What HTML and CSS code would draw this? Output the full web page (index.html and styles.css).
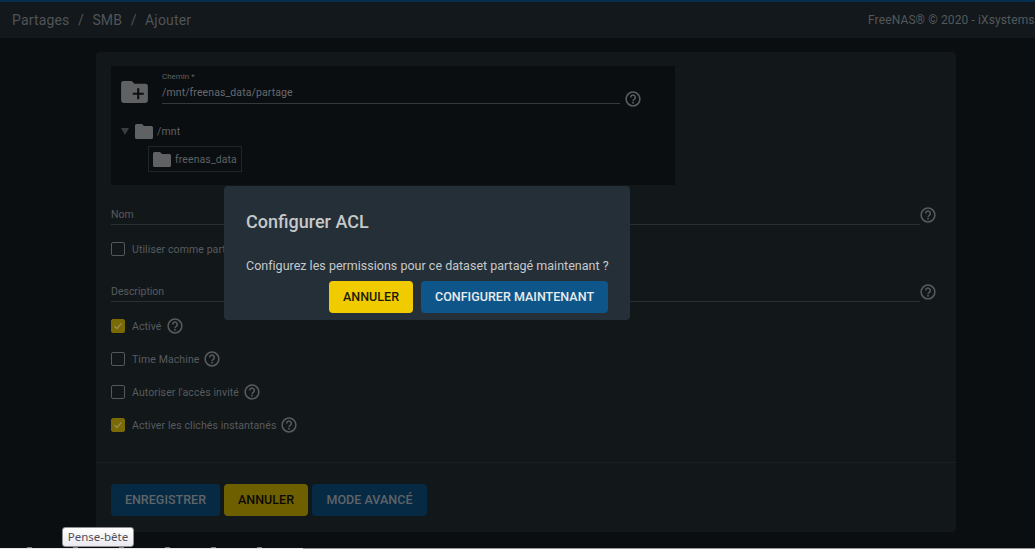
FILE: index.html
```html
<!DOCTYPE html>
<html lang="fr">
<head>
<meta charset="utf-8">
<title>Partages / SMB / Ajouter</title>
<link rel="stylesheet" href="styles.css">
</head>
<body>
<svg class="defs" width="0" height="0" aria-hidden="true">
  <symbol id="help" viewBox="0 0 16 16">
    <circle cx="8" cy="8" r="6.9" fill="none" stroke="currentColor" stroke-width="1.5"/>
    <path d="M5.7 6.4a2.3 2.3 0 1 1 3.6 1.9c-.8.5-1.3 1-1.3 1.9" fill="none" stroke="currentColor" stroke-width="1.5"/>
    <rect x="7.2" y="11" width="1.6" height="1.6" fill="currentColor"/>
  </symbol>
  <symbol id="folder" viewBox="0 0 18 15">
    <path d="M1.5 0H7l2 2h7.5A1.5 1.5 0 0 1 18 3.500V13.500A1.500 1.500 0 0 1 16.500 15H1.500A1.500 1.500 0 0 1 0 13.500V1.500A1.500 1.500 0 0 1 1.500 0z" fill="currentColor"/>
  </symbol>
  <symbol id="tick" viewBox="0 0 14 14">
    <path d="M3 7.200l2.800 2.800L11 4" fill="none" stroke="currentColor" stroke-width="1.500"/>
  </symbol>
</svg>
<div class="shell">
  <header class="topbar">
    <nav class="crumbs"><span>Partages</span><i>/</i><span>SMB</span><i>/</i><span>Ajouter</span></nav>
    <div class="copyright">FreeNAS® © 2020 - iXsystems</div>
  </header>
  <main class="content">
    <form class="card">
      <section class="explorer">
        <div class="path-row">
          <svg class="folder-add" viewBox="0 0 28 23">
            <path d="M2.500 0H11l3 3h11.500A2.500 2.500 0 0 1 28 5.500V20.500A2.500 2.500 0 0 1 25.500 23H2.500A2.500 2.500 0 0 1 0 20.500V2.500A2.500 2.500 0 0 1 2.500 0z" fill="#5f6163"/>
            <path d="M16.800 7.500h2.200v4.700h4.700v2.200H19v4.700h-2.200v-4.700h-4.700v-2.200h4.700z" fill="#0b0f12"/>
          </svg>
          <div class="path-field">
            <label class="mini-label">Chemin *</label>
            <div class="path-value">/mnt/freenas_data/partage</div>
          </div>
          <svg class="help help-path"><use href="#help"/></svg>
        </div>
        <div class="tree-root">
          <span class="caret"></span>
          <svg class="tree-folder"><use href="#folder"/></svg>
          <span>/mnt</span>
        </div>
        <div class="tree-child">
          <svg class="tree-folder"><use href="#folder"/></svg>
          <span>freenas_data</span>
        </div>
      </section>

      <div class="field field-name">
        <div class="field-line"><span>Nom</span></div>
        <svg class="help"><use href="#help"/></svg>
      </div>
      <div class="check check-home">
        <span class="box"></span><span>Utiliser comme partage home</span>
      </div>
      <div class="field field-desc">
        <div class="field-line"><span>Description</span></div>
        <svg class="help"><use href="#help"/></svg>
      </div>
      <div class="check check-first">
        <span class="box on"><svg><use href="#tick"/></svg></span><span>Activé</span>
        <svg class="help"><use href="#help"/></svg>
      </div>
      <div class="check">
        <span class="box"></span><span>Time Machine</span>
        <svg class="help"><use href="#help"/></svg>
      </div>
      <div class="check">
        <span class="box"></span><span>Autoriser l'accès invité</span>
        <svg class="help"><use href="#help"/></svg>
      </div>
      <div class="check">
        <span class="box on"><svg><use href="#tick"/></svg></span><span>Activer les clichés instantanés</span>
        <svg class="help"><use href="#help"/></svg>
      </div>
      <div class="actions">
        <button type="button" class="btn dim-blue btn-save">ENREGISTRER</button>
        <button type="button" class="btn dim-yellow btn-cancel">ANNULER</button>
        <button type="button" class="btn dim-blue btn-adv">MODE AVANCÉ</button>
      </div>
    </form>
  </main>
  <div class="page-edge"></div>
</div>

<div class="dialog" role="dialog">
  <h2>Configurer ACL</h2>
  <p>Configurez les permissions pour ce dataset partagé maintenant ?</p>
  <div class="dialog-actions">
    <button type="button" class="btn yellow dlg-cancel">ANNULER</button>
    <button type="button" class="btn blue dlg-ok">CONFIGURER MAINTENANT</button>
  </div>
</div>

<div class="tooltip">Pense-bête</div>
</body>
</html>
```
FILE: styles.css
```css
* { box-sizing: border-box; }
html, body { margin: 0; height: 100%; }
body {
  overflow: hidden;
  background: #0a0e11;
  font-family: Roboto, "Liberation Sans", sans-serif;
  color: #5d6063;
}
.defs { position: absolute; }
.shell { height: 549px; display: flex; flex-direction: column; }

.topbar {
  height: 38px;
  flex: none;
  border-top: 2px solid #062f4d;
  background: #12181b;
  display: flex;
  justify-content: space-between;
  align-items: center;
  padding: 0 0 0 12px;
}
.crumbs { display: flex; font-size: 14px; letter-spacing: .16px; color: #505457; }
.crumbs i { font-style: normal; margin: 0 8.500px; }
.copyright { font-size: 12px; letter-spacing: .12px; color: #54585b; white-space: nowrap; width: 167px; overflow: hidden; }

.content { flex: 1; padding: 14px 79px 15px 96px; min-height: 0; }
.card {
  height: 480px;
  background: #12171a;
  border-radius: 4px;
  padding: 14px 20px 0 15px;
  display: flex;
  flex-direction: column;
}

.explorer {
  width: 564px;
  height: 119px;
  flex: none;
  background: #0a0e11;
  padding: 0 0 0 10px;
}
.path-row { display: flex; height: 48px; position: relative; }
.folder-add { width: 27px; height: 22px; margin-top: 15px; flex: none; }
.path-field { width: 458px; margin-left: 14px; height: 38px; border-bottom: 1px solid #35393c; padding-top: 6px; }
.mini-label { display: block; font-size: 8px; line-height: 9px; color: #5e6163; }
.path-value { font-size: 10.500px; line-height: 13px; margin-top: 5px; letter-spacing: .1px; color: #686b6e; }
.help { width: 16px; height: 16px; flex: none; color: #595b5d; }
.help-path { margin: 25px 0 0 5px; color: #5c5e60; }

.tree-root { display: flex; align-items: center; height: 18px; margin-top: 8px; font-size: 10.500px; letter-spacing: .15px; color: #5f6265; }
.caret { width: 0; height: 0; border-left: 4px solid transparent; border-right: 4px solid transparent; border-top: 7px solid #3a3d3f; margin-right: 6px; }
.tree-folder { width: 18px; height: 15px; color: #5f6163; margin-right: 4px; flex: none; }
.tree-child {
  display: flex;
  align-items: center;
  width: 94px;
  height: 26px;
  margin: 6px 0 0 27px;
  padding-left: 4px;
  font-size: 10.500px;
  letter-spacing: .1px;
  color: #5f6265;
  border: 1px solid #202528;
}

.field { display: flex; align-items: flex-end; font-size: 10.500px; color: #585b5e; }
.field-line { flex: 1; height: 20px; border-bottom: 1px solid #2d3033; display: flex; align-items: flex-end; padding-bottom: 3px; }
.field .help { margin-bottom: 2px; }
.field-name { margin-top: 20px; }
.field-desc { margin-top: 26px; }

.check { display: flex; align-items: center; height: 14px; margin-top: 19px; font-size: 10.500px; letter-spacing: .1px; color: #585b5e; white-space: nowrap; }
.check-home { margin-top: 17px; }
.check-first { margin-top: 17px; }
.check .help { margin-left: 5px; }
.box { width: 14px; height: 14px; flex: none; margin-right: 7px; border: 1px solid #55585a; border-radius: 2px; }
.box.on { background: #796a06; border-color: #796a06; color: #99905a; }
.box svg { display: block; width: 12px; height: 12px; }

.actions {
  margin: 30px -20px 0 -15px;
  padding: 21px 0 0 15px;
  border-top: 1px solid #1a1f22;
  display: flex;
  gap: 4px;
}
.btn {
  height: 32px;
  padding: 0;
  border: 0;
  border-radius: 4px;
  font: 500 12.500px/32px Roboto, "Liberation Sans", sans-serif;
  letter-spacing: .03px;
}
.dim-blue { background: #062a44; color: #606467; }
.dim-yellow { background: #6e5f00; color: #0b0a02; }
.btn-save { width: 109px; }
.btn-cancel { width: 84px; }
.btn-adv { width: 115px; }

.page-edge {
  height: 2px;
  flex: none;
  background-color: #0a0e11;
  background-image:
    linear-gradient(90deg, #e8e8e8 303px, #9a9a9a 303px),
    repeating-linear-gradient(90deg, transparent 0 27px, #77797a 27px 32px, transparent 32px 46px);
  background-size: 100% 1px, 303px 1px;
  background-position: 0 100%, 0 0;
  background-repeat: no-repeat;
}

.dialog {
  position: absolute;
  left: 224px;
  top: 186px;
  width: 406px;
  height: 134px;
  background: #252f38;
  border-radius: 4px;
  padding: 24px 22px 0;
  color: #d5d7d9;
}
.dialog h2 { margin: 0; font-size: 18px; line-height: 24px; font-weight: 500; color: #c6c8ca; }
.dialog p { margin: 25px 0 0; font-size: 12.500px; line-height: 14px; letter-spacing: .01px; color: #c6c9cb; white-space: nowrap; }
.dialog-actions { display: flex; justify-content: flex-end; gap: 8px; margin-top: 8px; }
.yellow { background: #f0cb00; color: #1d1a02; }
.blue { background: #0e5689; color: #e9ecee; }
.dlg-cancel { width: 84px; }
.dlg-ok { width: 187px; }

.tooltip {
  position: absolute;
  left: 62px;
  top: 527px;
  width: 72px;
  height: 20px;
  background: linear-gradient(#fff, #e9e9f0);
  border: 1px solid #8f8f8f;
  border-radius: 3px;
  font: 11.500px/18px "Noto Sans", "Liberation Sans", sans-serif;
  color: #4f4f5c;
  text-align: center;
}
```
